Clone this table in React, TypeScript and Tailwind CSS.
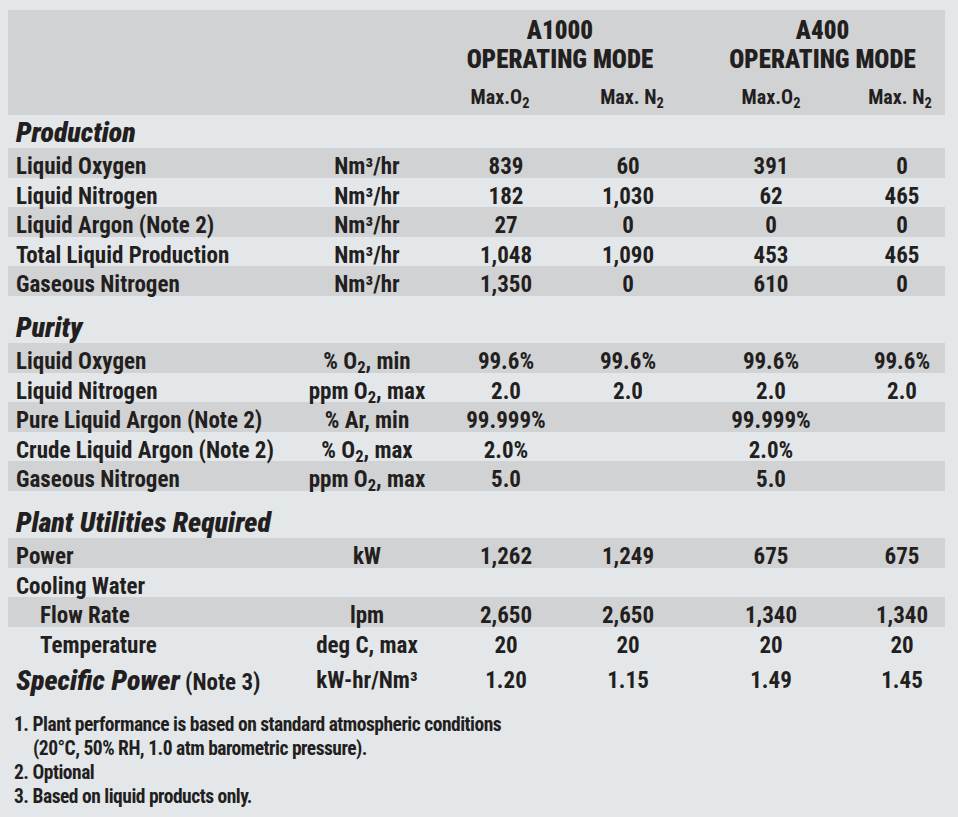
import type { ReactNode } from "react";

type Row = {
  label: ReactNode;
  unit: ReactNode;
  values: ReactNode[];
  shaded: boolean;
  indent?: boolean;
};

const O2 = (
  <>
    O<sub className="text-[0.72em]">2</sub>
  </>
);
const N2 = (
  <>
    N<sub className="text-[0.72em]">2</sub>
  </>
);

const production: Row[] = [
  { label: "Liquid Oxygen", unit: "Nm³/hr", values: ["839", "60", "391", "0"], shaded: true },
  { label: "Liquid Nitrogen", unit: "Nm³/hr", values: ["182", "1,030", "62", "465"], shaded: false },
  { label: "Liquid Argon (Note 2)", unit: "Nm³/hr", values: ["27", "0", "0", "0"], shaded: true },
  { label: "Total Liquid Production", unit: "Nm³/hr", values: ["1,048", "1,090", "453", "465"], shaded: false },
  { label: "Gaseous Nitrogen", unit: "Nm³/hr", values: ["1,350", "0", "610", "0"], shaded: true },
];

const purity: Row[] = [
  { label: "Liquid Oxygen", unit: <>% {O2}, min</>, values: ["99.6%", "99.6%", "99.6%", "99.6%"], shaded: true },
  { label: "Liquid Nitrogen", unit: <>ppm {O2}, max</>, values: ["2.0", "2.0", "2.0", "2.0"], shaded: false },
  { label: "Pure Liquid Argon (Note 2)", unit: "% Ar, min", values: ["99.999%", "", "99.999%", ""], shaded: true },
  { label: "Crude Liquid Argon (Note 2)", unit: <>% {O2}, max</>, values: ["2.0%", "", "2.0%", ""], shaded: false },
  { label: "Gaseous Nitrogen", unit: <>ppm {O2}, max</>, values: ["5.0", "", "5.0", ""], shaded: true },
];

const utilities: Row[] = [
  { label: "Power", unit: "kW", values: ["1,262", "1,249", "675", "675"], shaded: true },
  { label: "Cooling Water", unit: "", values: ["", "", "", ""], shaded: false },
  { label: "Flow Rate", unit: "lpm", values: ["2,650", "2,650", "1,340", "1,340"], shaded: true, indent: true },
  { label: "Temperature", unit: "deg C, max", values: ["20", "20", "20", "20"], shaded: false, indent: true },
];

const cols = "grid grid-cols-[292px_134px_144px_100px_186px_76px] whitespace-nowrap";

function DataRow({ row }: { row: Row }) {
  return (
    <div className={`${cols} h-[29.5px] items-center pt-[2px] ${row.shaded ? "bg-[#d1d2d4]" : ""}`}>
      <div className={row.indent ? "pl-[32px]" : "pl-[8px]"}>{row.label}</div>
      <div className="text-center">{row.unit}</div>
      {row.values.map((v, i) => (
        <div key={i} className="text-center">
          {v}
        </div>
      ))}
    </div>
  );
}

function SectionTitle({ children, tall }: { children: ReactNode; tall?: boolean }) {
  return (
    <div className={`flex items-end pl-[8px] pb-[2px] ${tall ? "h-[47.5px]" : "h-[33px]"}`}>
      <span className="text-[28px] leading-[26px] font-black italic">{children}</span>
    </div>
  );
}

export default function App() {
  return (
    <div className="min-h-screen bg-[#e4e7ea] pt-[10px] text-[#231f20] font-['Roboto_Condensed','Liberation_Sans',sans-serif] font-bold text-[23px]">
      <div className="ml-[8px] w-[937px]">
        {/* Header */}
        <div className="h-[105px] bg-[#d1d2d4] pt-[6px]">
          <div className="flex text-[25px] leading-[29px] font-black whitespace-nowrap">
            <div className="w-[432px]" />
            <div className="w-[240px] text-center">
              A1000
              <br />
              OPERATING MODE
            </div>
            <div className="w-[20px]" />
            <div className="w-[245px] text-center">
              A400
              <br />
              OPERATING MODE
            </div>
          </div>
          <div className={`${cols} mt-[11px] text-[20px] leading-[24px]`}>
            <div />
            <div />
            <div className="text-center pr-[12px]">Max.{O2}</div>
            <div className="text-center pl-[8px]">Max. {N2}</div>
            <div className="text-center">Max.{O2}</div>
            <div className="text-center pr-[4px]">Max. {N2}</div>
          </div>
        </div>

        <SectionTitle>Production</SectionTitle>
        {production.map((r, i) => (
          <DataRow key={i} row={r} />
        ))}

        <SectionTitle tall>Purity</SectionTitle>
        {purity.map((r, i) => (
          <DataRow key={i} row={r} />
        ))}

        <SectionTitle tall>Plant Utilities Required</SectionTitle>
        {utilities.map((r, i) => (
          <DataRow key={i} row={r} />
        ))}

        {/* Specific power */}
        <div className={`${cols} mt-[2px] h-[29.5px] items-center pt-[2px]`}>
          <div className="pl-[8px]">
            <span className="text-[28px] font-black italic">Specific Power</span> (Note 3)
          </div>
          <div className="text-center">kW-hr/Nm³</div>
          <div className="text-center">1.20</div>
          <div className="text-center">1.15</div>
          <div className="text-center">1.49</div>
          <div className="text-center">1.45</div>
        </div>

        {/* Notes */}
        <div className="mt-[25px] pl-[6px] text-[19.5px] leading-[24px] tracking-[-0.5px] whitespace-nowrap">
          <div>1. Plant performance is based on standard atmospheric conditions</div>
          <div className="pl-[19px]">(20°C, 50% RH, 1.0 atm barometric pressure).</div>
          <div>2. Optional</div>
          <div>3. Based on liquid products only.</div>
        </div>
      </div>
    </div>
  );
}
